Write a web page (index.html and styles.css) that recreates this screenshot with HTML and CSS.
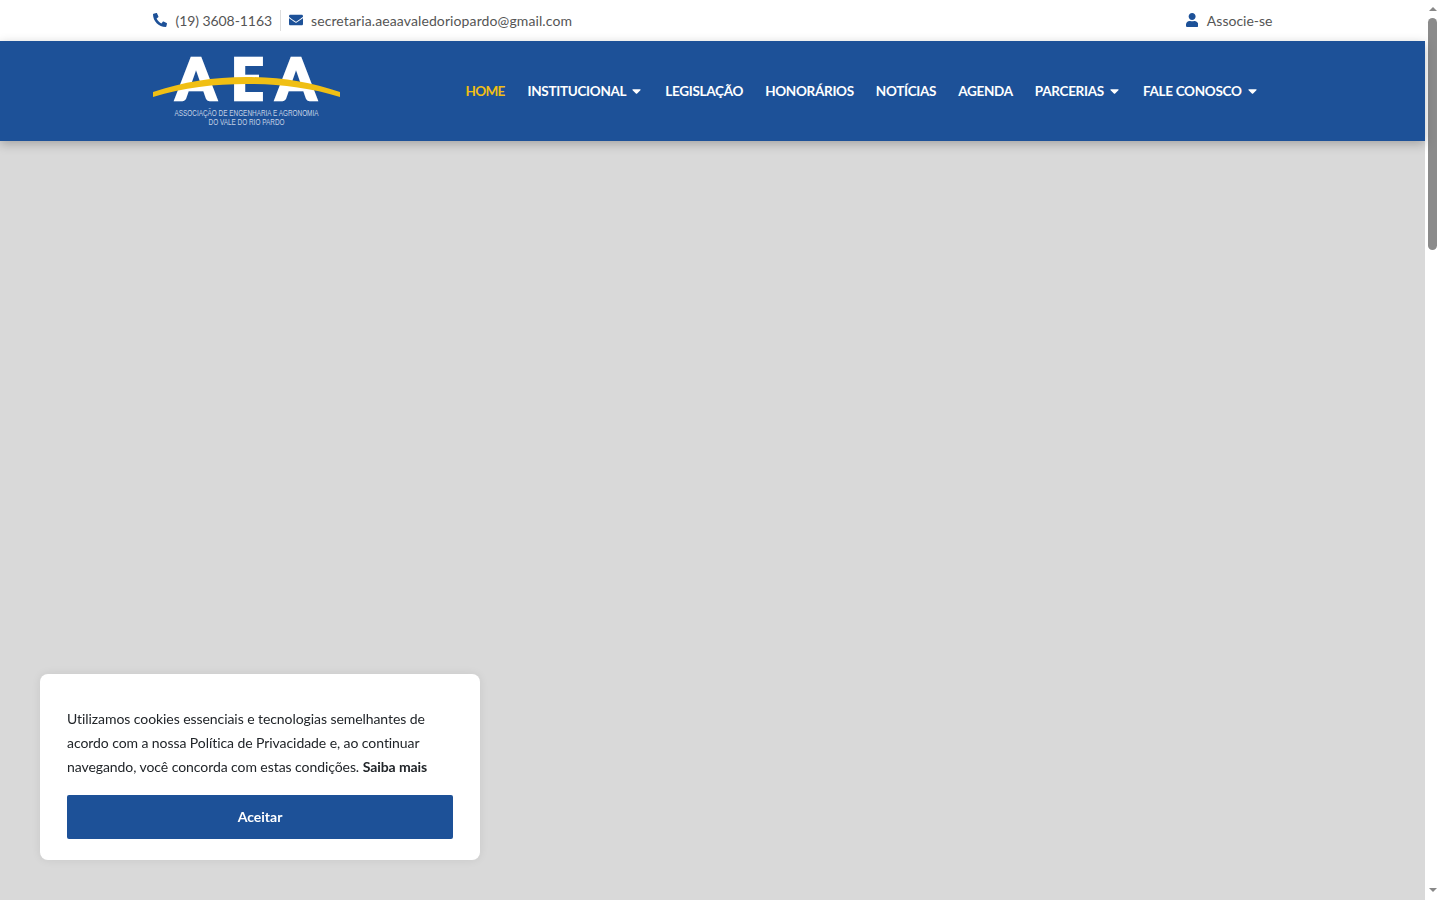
FILE: index.html
```html
<!DOCTYPE html>
<html lang="pt-BR">
<head>
  <meta charset="UTF-8">
  <title>AEA - Associação de Engenharia e Agronomia do Vale do Rio Pardo</title>
  <link rel="stylesheet" href="styles.css">
</head>
<body>
  <div class="page">
    <div class="topbar">
      <div class="container topbar-inner">
        <div class="contacts">
          <a class="contact contact-phone" href="#">
            <svg class="icon" viewBox="0 0 512 512"><path d="M18.600 24.600l104-24c11.300-2.600 22.900 3.300 27.500 13.900l48 112c4.200 9.800 1.400 21.300-6.900 28l-60.600 49.600c36 76.700 98.900 140.500 177.200 177.200l49.600-60.600c6.800-8.300 18.200-11.100 28-6.900l112 48c10.700 4.600 16.600 16.200 14 27.500l-24 104C484.900 504.200 475.300 512 464 512 207.900 512 0 304.500 0 48c0-11.200 7.700-20.900 18.600-23.400z"/></svg>
            <span>(19) 3608-1163</span>
          </a>
          <a class="contact contact-mail" href="#">
            <svg class="icon" viewBox="0 0 512 512"><path d="M502.3 190.800c3.900-3.100 9.700-.2 9.700 4.700V400c0 26.500-21.500 48-48 48H48c-26.500 0-48-21.500-48-48V195.600c0-5 5.700-7.800 9.700-4.700 22.400 17.400 52.100 39.500 154.100 113.600 21.100 15.400 56.700 47.800 92.200 47.600 35.700.3 72-32.800 92.300-47.600 102-74.100 131.600-96.300 154-113.700zM256 320c23.200.4 56.600-29.200 73.400-41.400 132.700-96.300 142.800-104.700 173.400-128.700 5.800-4.500 9.200-11.500 9.200-18.900v-19c0-26.500-21.500-48-48-48H48C21.500 64 0 85.500 0 112v19c0 7.400 3.400 14.300 9.200 18.900 30.600 23.900 40.700 32.400 173.400 128.700 16.800 12.200 50.200 41.800 73.400 41.400z"/></svg>
            <span>secretaria.aeaavaledoriopardo@gmail.com</span>
          </a>
        </div>
        <a class="contact contact-user" href="#">
          <svg class="icon" viewBox="0 0 448 512"><path d="M224 256c70.700 0 128-57.300 128-128S294.700 0 224 0 96 57.300 96 128s57.300 128 128 128zm89.600 32h-16.700c-22.200 10.200-46.900 16-72.900 16s-50.600-5.800-72.900-16h-16.700C60.200 288 0 348.200 0 422.400V464c0 26.500 21.500 48 48 48h352c26.500 0 48-21.500 48-48v-41.600c0-74.200-60.200-134.400-134.400-134.400z"/></svg>
          <span>Associe-se</span>
        </a>
      </div>
    </div>

    <header class="header">
      <div class="container header-inner">
        <a class="logo" href="#">
          <svg width="187" height="72" viewBox="0 0 187 72">
            <text class="logo-letters" x="23 78 123" y="45">AEA</text>
            <path class="logo-arc" d="M0 37C30 27 60 22 93.500 22S157 27 187 37V42C157 32.500 125 29 93.500 29S30 32.500 0 42z"/>
            <text class="logo-sub" x="93.500" y="61" text-anchor="middle" textLength="144" lengthAdjust="spacingAndGlyphs">ASSOCIAÇÃO DE ENGENHARIA E AGRONOMIA</text>
            <text class="logo-sub" x="93.500" y="70" text-anchor="middle" textLength="76" lengthAdjust="spacingAndGlyphs">DO VALE DO RIO PARDO</text>
          </svg>
        </a>
        <nav class="nav">
          <a class="nav-link active" href="#">HOME</a>
          <a class="nav-link" href="#">INSTITUCIONAL<svg class="caret" viewBox="0 0 320 512"><path d="M31.300 192h257.300c17.800 0 26.700 21.500 14.100 34.100L174.100 354.800c-7.800 7.800-20.500 7.800-28.300 0L17.200 226.100C4.600 213.500 13.500 192 31.300 192z"/></svg></a>
          <a class="nav-link" href="#">LEGISLAÇÃO</a>
          <a class="nav-link" href="#">HONORÁRIOS</a>
          <a class="nav-link" href="#">NOTÍCIAS</a>
          <a class="nav-link" href="#">AGENDA</a>
          <a class="nav-link" href="#">PARCERIAS<svg class="caret" viewBox="0 0 320 512"><path d="M31.300 192h257.300c17.800 0 26.700 21.500 14.100 34.100L174.100 354.800c-7.800 7.800-20.500 7.800-28.300 0L17.200 226.100C4.600 213.500 13.500 192 31.300 192z"/></svg></a>
          <a class="nav-link" href="#">FALE CONOSCO<svg class="caret" viewBox="0 0 320 512"><path d="M31.300 192h257.300c17.800 0 26.700 21.500 14.100 34.100L174.100 354.800c-7.800 7.800-20.500 7.800-28.300 0L17.200 226.100C4.600 213.500 13.500 192 31.300 192z"/></svg></a>
        </nav>
      </div>
    </header>

    <main class="banner"></main>
  </div>

  <div class="scrollbar">
    <span class="scroll-arrow up"></span>
    <span class="scroll-track"><span class="scroll-thumb"></span></span>
    <span class="scroll-arrow down"></span>
  </div>

  <div class="cookie">
    <p>Utilizamos cookies essenciais e tecnologias semelhantes de acordo com a nossa Política de Privacidade e, ao continuar navegando, você concorda com estas condições. <a href="#">Saiba mais</a></p>
    <button class="cookie-btn">Aceitar</button>
  </div>
</body>
</html>
```

FILE: styles.css
```css
html, body { height: 100%; }
body { margin: 0; font-family: Lato, "Open Sans", sans-serif; background: #fff; display: flex; height: 900px; overflow: hidden; }
a { text-decoration: none; color: inherit; }

.page { flex: 1; display: flex; flex-direction: column; min-width: 0; }
.container { width: 1120px; margin: 0 auto; }

.topbar { height: 41px; background: #fff; }
.topbar-inner { height: 100%; box-sizing: border-box; padding-bottom: 1px; display: flex; justify-content: space-between; align-items: center; }
.contacts { display: flex; align-items: center; }
.contact { display: flex; align-items: center; font-size: 14px; color: #555; }
.icon { width: 14px; height: 14px; fill: #1d5198; margin-right: 8px; }
.contact-phone { padding-right: 8px; border-right: 1px solid #ddd; height: 21px; letter-spacing: -.07px; }
.contact-phone .icon { margin-right: 9px; }
.contact-mail { padding-left: 8px; letter-spacing: .11px; }
.contact-user .icon { width: 12.250px; margin-right: 9px; }

.header { height: 100px; background: #1d5198; box-shadow: 0 3px 10px rgba(0,0,0,.25); position: relative; }
.header-inner { height: 100%; display: flex; align-items: center; }
.logo { display: block; height: 72px; }
.logo svg { display: block; }
.logo-letters { font-family: Lato, sans-serif; font-weight: 900; font-size: 57px; fill: #fff; stroke: #fff; stroke-width: 2.500px; }
.logo-arc { fill: #f0bf14; }
.logo-sub { font-family: "Liberation Sans", sans-serif; font-size: 9.500px; fill: #c5d3e6; }

.nav { display: flex; margin-left: 126px; gap: 22px; }
.nav-link { font-size: 13.500px; font-weight: 700; color: #fff; line-height: 20px; letter-spacing: -.3px; white-space: nowrap; display: flex; align-items: center; }
.nav-link.active { color: #f0bf14; letter-spacing: -.7px; margin-right: 1px; }
.caret { width: 9px; height: 14px; fill: #fff; margin-left: 6px; margin-right: 2px; }

.banner { flex: 1; background: #d9d9d9; }

.scrollbar { width: 15px; background: #fff; display: flex; flex-direction: column; align-items: center; }
.scroll-arrow { width: 0; height: 0; flex: none; border-left: 4.500px solid transparent; border-right: 4.500px solid transparent; }
.scroll-arrow.up { border-bottom: 4px solid #888; margin: 7px 0; }
.scroll-arrow.down { border-top: 4px solid #888; margin: 0 0 8px; }
.scroll-track { flex: 1; width: 100%; display: block; }
.scroll-thumb { display: block; width: 9px; height: 232px; margin: 0 auto; background: #8b8b8b; border-radius: 5px; }

.cookie { position: fixed; left: 40px; top: 674px; width: 440px; height: 186px; box-sizing: border-box; padding: 33px 27px 21px; background: #fff; border-radius: 8px; box-shadow: 0 0 10px rgba(0,0,0,.08); }
.cookie p { margin: 0 0 16px; font-size: 14px; line-height: 24px; letter-spacing: -.07px; color: #212529; }
.cookie p a { font-weight: 700; }
.cookie-btn { display: block; width: 100%; height: 44px; padding: 0 0 2px; border: 0; border-radius: 2px; background: #1d5198; color: #fff; font-family: inherit; font-size: 14px; font-weight: 700; }
```
